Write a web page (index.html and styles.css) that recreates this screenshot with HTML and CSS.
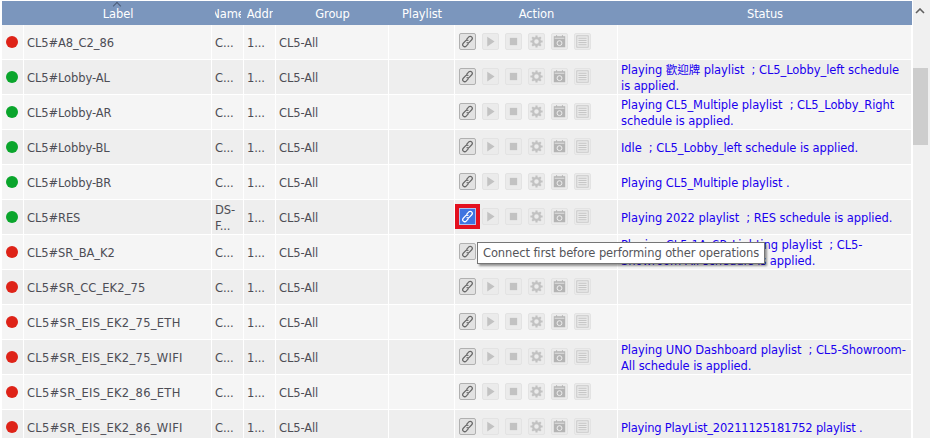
FILE: index.html
```html
<!DOCTYPE html>
<html lang="en">
<head>
<meta charset="utf-8">
<title>Devices</title>
<link rel="stylesheet" href="styles.css">
</head>
<body>
<svg class="defs" width="0" height="0" aria-hidden="true">
  <symbol id="i-link" viewBox="0 0 16 16"><g fill="none" stroke="currentColor" stroke-width="1.5"><path d="M6.6 5.6 9.6 2.4a2.3 2.3 0 0 1 3.6 3.4L10.2 9a2.3 2.3 0 0 1-3.3 0"/><path d="M9.4 10.4 6.4 13.6a2.3 2.3 0 0 1-3.6-3.4L5.8 7a2.3 2.3 0 0 1 3.3 0"/></g></symbol>
  <symbol id="i-play" viewBox="0 0 16 16"><path fill="currentColor" d="M4 2 13 8l-9 6z"/></symbol>
  <symbol id="i-stop" viewBox="0 0 16 16"><rect fill="currentColor" x="3.5" y="3.5" width="9" height="9"/></symbol>
  <symbol id="i-gear" viewBox="0 0 16 16"><circle cx="8" cy="8" r="4.2" fill="none" stroke="currentColor" stroke-width="2.8"/><path stroke="currentColor" stroke-width="2.6" d="M8 .5v3M8 12.5v3M.5 8h3M12.5 8h3M2.7 2.7l2 2M11.3 11.3l2 2M13.3 2.7l-2 2M4.7 11.3l-2 2"/></symbol>
  <symbol id="i-cal" viewBox="0 0 16 16"><path fill="currentColor" d="M1 1.5h3V0h1v1.5h6V0h1v1.5h3V15H1z"/><rect fill="#efefef" x="2" y="3.4" width="12" height="1"/><circle cx="8" cy="10" r="3" fill="none" stroke="#efefef" stroke-width="1.2"/></symbol>
  <symbol id="i-list" viewBox="0 0 16 16"><rect x="1" y="1" width="14" height="14" fill="none" stroke="currentColor"/><path stroke="currentColor" stroke-width="1.2" d="M3 4h10M3 6.7h10M3 9.3h10M3 12h10"/></symbol>
</svg>
<div class="app">
  <div class="grid-wrap">
    <table class="grid">
      <colgroup>
        <col class="c-dot"><col class="c-label"><col class="c-name"><col class="c-addr"><col class="c-group"><col class="c-pl"><col class="c-act"><col class="c-status">
      </colgroup>
      <thead>
        <tr><th></th><th class="sorted">Label</th><th><div class="clip"><span>Name</span></div></th><th><div class="clip"><span>Addr</span></div></th><th>Group</th><th>Playlist</th><th>Action</th><th>Status</th></tr>
      </thead>
      <tbody>
        <tr><td><i class="dot red"></i></td><td>CL5#A8_C2_86</td><td>C...</td><td>1...</td><td>CL5-All</td><td></td><td class="acts"><span class="btn on"><svg><use href="#i-link"/></svg></span><span class="btn"><svg><use href="#i-play"/></svg></span><span class="btn"><svg><use href="#i-stop"/></svg></span><span class="btn"><svg><use href="#i-gear"/></svg></span><span class="btn dark"><svg><use href="#i-cal"/></svg></span><span class="btn"><svg><use href="#i-list"/></svg></span></td><td class="status"></td></tr>
        <tr><td><i class="dot green"></i></td><td>CL5#Lobby-AL</td><td>C...</td><td>1...</td><td>CL5-All</td><td></td><td class="acts"><span class="btn on"><svg><use href="#i-link"/></svg></span><span class="btn"><svg><use href="#i-play"/></svg></span><span class="btn"><svg><use href="#i-stop"/></svg></span><span class="btn"><svg><use href="#i-gear"/></svg></span><span class="btn dark"><svg><use href="#i-cal"/></svg></span><span class="btn"><svg><use href="#i-list"/></svg></span></td><td class="status">Playing 歡迎牌 playlist &nbsp;; CL5_Lobby_left schedule is applied.</td></tr>
        <tr><td><i class="dot green"></i></td><td>CL5#Lobby-AR</td><td>C...</td><td>1...</td><td>CL5-All</td><td></td><td class="acts"><span class="btn on"><svg><use href="#i-link"/></svg></span><span class="btn"><svg><use href="#i-play"/></svg></span><span class="btn"><svg><use href="#i-stop"/></svg></span><span class="btn"><svg><use href="#i-gear"/></svg></span><span class="btn dark"><svg><use href="#i-cal"/></svg></span><span class="btn"><svg><use href="#i-list"/></svg></span></td><td class="status">Playing CL5_Multiple playlist &nbsp;; CL5_Lobby_Right schedule is applied.</td></tr>
        <tr><td><i class="dot green"></i></td><td>CL5#Lobby-BL</td><td>C...</td><td>1...</td><td>CL5-All</td><td></td><td class="acts"><span class="btn on"><svg><use href="#i-link"/></svg></span><span class="btn"><svg><use href="#i-play"/></svg></span><span class="btn"><svg><use href="#i-stop"/></svg></span><span class="btn"><svg><use href="#i-gear"/></svg></span><span class="btn dark"><svg><use href="#i-cal"/></svg></span><span class="btn"><svg><use href="#i-list"/></svg></span></td><td class="status">Idle &nbsp;; CL5_Lobby_left schedule is applied.</td></tr>
        <tr><td><i class="dot green"></i></td><td>CL5#Lobby-BR</td><td>C...</td><td>1...</td><td>CL5-All</td><td></td><td class="acts"><span class="btn on"><svg><use href="#i-link"/></svg></span><span class="btn"><svg><use href="#i-play"/></svg></span><span class="btn"><svg><use href="#i-stop"/></svg></span><span class="btn"><svg><use href="#i-gear"/></svg></span><span class="btn dark"><svg><use href="#i-cal"/></svg></span><span class="btn"><svg><use href="#i-list"/></svg></span></td><td class="status">Playing CL5_Multiple playlist .</td></tr>
        <tr><td><i class="dot green"></i></td><td>CL5#RES</td><td>DS-F...</td><td>1...</td><td>CL5-All</td><td></td><td class="acts"><span class="btn active"><svg><use href="#i-link"/></svg></span><span class="btn"><svg><use href="#i-play"/></svg></span><span class="btn"><svg><use href="#i-stop"/></svg></span><span class="btn"><svg><use href="#i-gear"/></svg></span><span class="btn dark"><svg><use href="#i-cal"/></svg></span><span class="btn"><svg><use href="#i-list"/></svg></span></td><td class="status">Playing 2022 playlist &nbsp;; RES schedule is applied.</td></tr>
        <tr><td><i class="dot red"></i></td><td>CL5#SR_BA_K2</td><td>C...</td><td>1...</td><td>CL5-All</td><td></td><td class="acts"><span class="btn on"><svg><use href="#i-link"/></svg></span><span class="btn"><svg><use href="#i-play"/></svg></span><span class="btn"><svg><use href="#i-stop"/></svg></span><span class="btn"><svg><use href="#i-gear"/></svg></span><span class="btn dark"><svg><use href="#i-cal"/></svg></span><span class="btn"><svg><use href="#i-list"/></svg></span></td><td class="status">Playing CL5-1A_SP_Lighting playlist &nbsp;; CL5-Showroom-All schedule is applied.</td></tr>
        <tr><td><i class="dot red"></i></td><td class="long-a">CL5#SR_CC_EK2_75</td><td>C...</td><td>1...</td><td>CL5-All</td><td></td><td class="acts"><span class="btn on"><svg><use href="#i-link"/></svg></span><span class="btn"><svg><use href="#i-play"/></svg></span><span class="btn"><svg><use href="#i-stop"/></svg></span><span class="btn"><svg><use href="#i-gear"/></svg></span><span class="btn dark"><svg><use href="#i-cal"/></svg></span><span class="btn"><svg><use href="#i-list"/></svg></span></td><td class="status"></td></tr>
        <tr><td><i class="dot red"></i></td><td class="long-b">CL5#SR_EIS_EK2_75_ETH</td><td>C...</td><td>1...</td><td>CL5-All</td><td></td><td class="acts"><span class="btn on"><svg><use href="#i-link"/></svg></span><span class="btn"><svg><use href="#i-play"/></svg></span><span class="btn"><svg><use href="#i-stop"/></svg></span><span class="btn"><svg><use href="#i-gear"/></svg></span><span class="btn dark"><svg><use href="#i-cal"/></svg></span><span class="btn"><svg><use href="#i-list"/></svg></span></td><td class="status"></td></tr>
        <tr><td><i class="dot red"></i></td><td class="long-b">CL5#SR_EIS_EK2_75_WIFI</td><td>C...</td><td>1...</td><td>CL5-All</td><td></td><td class="acts"><span class="btn on"><svg><use href="#i-link"/></svg></span><span class="btn"><svg><use href="#i-play"/></svg></span><span class="btn"><svg><use href="#i-stop"/></svg></span><span class="btn"><svg><use href="#i-gear"/></svg></span><span class="btn dark"><svg><use href="#i-cal"/></svg></span><span class="btn"><svg><use href="#i-list"/></svg></span></td><td class="status">Playing UNO Dashboard playlist &nbsp;; CL5-Showroom-All schedule is applied.</td></tr>
        <tr><td><i class="dot red"></i></td><td class="long-b">CL5#SR_EIS_EK2_86_ETH</td><td>C...</td><td>1...</td><td>CL5-All</td><td></td><td class="acts"><span class="btn on"><svg><use href="#i-link"/></svg></span><span class="btn"><svg><use href="#i-play"/></svg></span><span class="btn"><svg><use href="#i-stop"/></svg></span><span class="btn"><svg><use href="#i-gear"/></svg></span><span class="btn dark"><svg><use href="#i-cal"/></svg></span><span class="btn"><svg><use href="#i-list"/></svg></span></td><td class="status"></td></tr>
        <tr><td><i class="dot red"></i></td><td class="long-b">CL5#SR_EIS_EK2_86_WIFI</td><td>C...</td><td>1...</td><td>CL5-All</td><td></td><td class="acts"><span class="btn on"><svg><use href="#i-link"/></svg></span><span class="btn"><svg><use href="#i-play"/></svg></span><span class="btn"><svg><use href="#i-stop"/></svg></span><span class="btn"><svg><use href="#i-gear"/></svg></span><span class="btn dark"><svg><use href="#i-cal"/></svg></span><span class="btn"><svg><use href="#i-list"/></svg></span></td><td class="status digits">Playing PlayList_20211125181752 playlist .</td></tr>
      </tbody>
    </table>
    <div class="tooltip">Connect first before performing other operations</div>
  </div>
  <div class="scrollbar">
    <svg class="arrow" viewBox="0 0 10 6"><path d="M1 5 5 1l4 4" fill="none" stroke="#606060" stroke-width="1.6"/></svg>
    <div class="thumb"></div>
  </div>
</div>
</body>
</html>
```

FILE: styles.css
```css
html, body { margin: 0; padding: 0; height: 438px; overflow: hidden; background: #fff; }
body { font-family: "DejaVu Sans", "Noto Sans CJK TC", sans-serif; font-size: 11.5px; letter-spacing: -0.1px; color: #4d4d55; }
.defs { position: absolute; }
.app { display: flex; height: 438px; }
.grid-wrap { position: relative; width: 913px; padding: 1px 0 0 2px; box-sizing: border-box; overflow: hidden; }
.grid { table-layout: fixed; width: 910px; border-collapse: separate; border-spacing: 0; }
.c-dot { width: 22px; } .c-label { width: 188px; } .c-name { width: 32px; } .c-addr { width: 32px; }
.c-group { width: 113px; } .c-pl { width: 66px; } .c-act { width: 163px; } .c-status { width: 294px; }
thead th { height: 24px; padding: 1px 0 0; box-sizing: border-box; background: #7b96bd; color: #fff; font-weight: 400; text-align: center; white-space: nowrap; overflow: hidden; }
.clip { display: flex; justify-content: center; overflow: hidden; margin: 0 3px; }
.clip span { flex: none; }
th.sorted { position: relative; }
th.sorted::before { content: ""; position: absolute; left: 50%; top: 2px; width: 5px; height: 5px; margin-left: -4px; border-left: 1px solid #4c5d78; border-top: 1px solid #4c5d78; transform: rotate(45deg); }
tbody tr { height: 35px; background: #f5f5f5; }
tbody tr:nth-child(even) { background: #eeeeee; }
tbody td { padding: 2px 3px 0; border-right: 1px solid #fff; border-bottom: 1px solid #fff; line-height: 16px; overflow: hidden; box-sizing: border-box; }
.long-a { letter-spacing: 0.1px; }
.long-b { letter-spacing: 0.3px; }
.dot { display: block; width: 12px; height: 12px; margin: -2px 0 0 1px; border-radius: 50%; }
.red { background: #de2318; }
.green { background: #0aa52c; }
tbody td.acts { padding: 0 0 1px 4px; white-space: nowrap; font-size: 0; line-height: 0; overflow: visible; }
.btn { display: inline-flex; align-items: center; justify-content: center; width: 17px; height: 17px; margin-right: 6px; box-sizing: border-box; border: 1px solid #e3e3e3; border-radius: 2px; background: #ebebeb; color: #c2c2c2; vertical-align: top; }
.btn svg { width: 13px; height: 13px; }
.btn.dark { color: #b4b4b4; }
.btn.on { background: #e2e2e2; border-color: #b0b0b0; color: #686868; }
.btn.active { background: #3f74e0; border-color: #aac2f2; border-radius: 0; color: #fff; outline: 4px solid #e3101f; }
.status { color: #1a00ee; letter-spacing: -0.07px; }
.status.digits { letter-spacing: -0.2px; }
.tooltip { position: absolute; left: 477px; top: 242px; height: 20px; padding: 0 5px; line-height: 20px; background: #fff; color: #55555a; border: 1px solid #767676; box-shadow: 2px 2px 2px rgba(0,0,0,.4); white-space: nowrap; }
.scrollbar { width: 17px; height: 438px; background: #f0f0f0; }
.arrow { display: block; width: 10px; height: 6px; margin: 8px 0 0 2px; }
.thumb { width: 15px; height: 77px; margin-top: 54px; background: #cdcdcd; }
```
